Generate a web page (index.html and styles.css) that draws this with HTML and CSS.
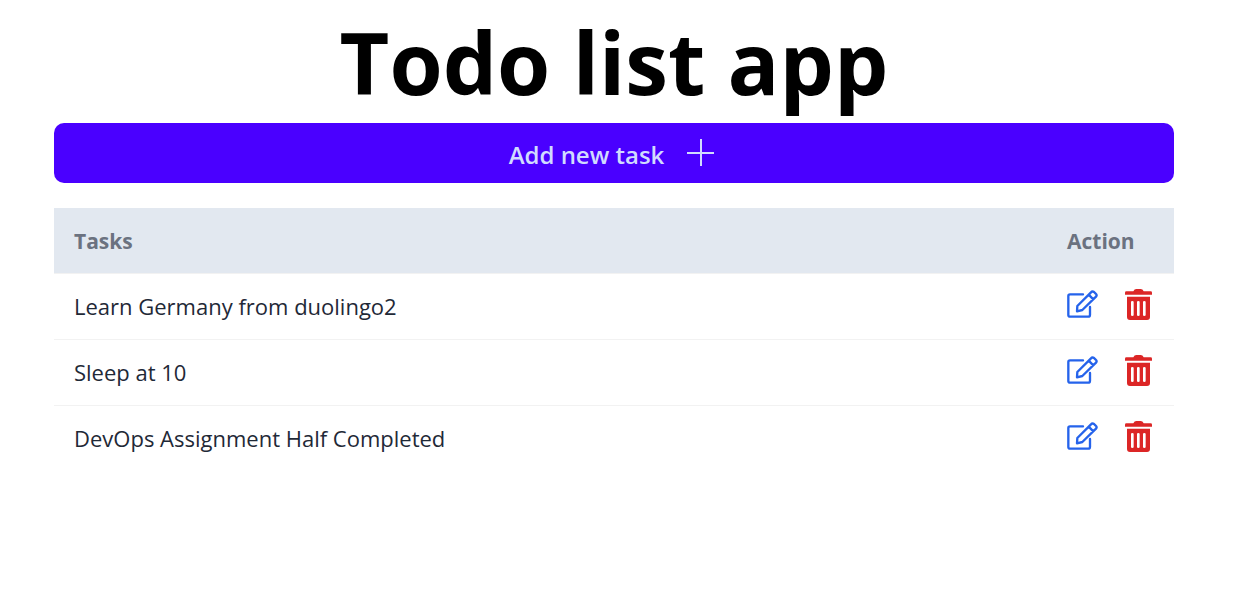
FILE: index.html
```html
<!DOCTYPE html>
<html lang="en">
<head>
<meta charset="utf-8">
<title>Todo list app</title>
<link rel="stylesheet" href="styles.css">
</head>
<body>
<svg class="sprite" aria-hidden="true">
  <symbol id="edit" viewBox="0 0 93 84">
    <path fill="none" stroke="currentColor" stroke-width="7" stroke-linecap="round" stroke-linejoin="round" d="M48 13H9Q4 13 4 18V75Q4 80 9 80H63Q69 80 69 74V51"/>
    <path fill="none" stroke="currentColor" stroke-width="7" stroke-linejoin="round" d="M31 48L72 7Q76 2 81 6L86 11Q91 15 87 20L46 60L30 64ZM65 14L79 28"/>
  </symbol>
  <symbol id="trash" viewBox="0 0 81 93">
    <path fill="currentColor" fill-rule="evenodd" d="M4 7H25Q28 0 34 0H47Q53 0 56 7H77Q81 7 81 11V17H0V11Q0 7 4 7ZM6 23H75V84Q75 93 66 93H15Q6 93 6 84ZM18 39V78Q18 81 22 81T26 78V39Q26 36 22 36T18 39ZM36 39V78Q36 81 40 81T44 78V39Q44 36 40 36T36 39ZM54 39V78Q54 81 58 81T62 78V39Q62 36 58 36T54 39Z"/>
  </symbol>
</svg>
<main class="page">
  <h1 class="title">Todo list app</h1>
  <button class="add" type="button">Add new task
    <svg class="plus" viewBox="0 0 28 28" aria-hidden="true"><path d="M14 0V27M0 14H27"/></svg>
  </button>
  <table class="tasks">
    <thead>
      <tr><th scope="col">Tasks</th><th class="action" scope="col">Action</th></tr>
    </thead>
    <tbody>
      <tr>
        <td>Learn Germany from duolingo2</td>
        <td class="action"><div class="buttons">
          <button class="icon edit" type="button" aria-label="Edit task"><svg><use href="#edit"/></svg></button>
          <button class="icon trash" type="button" aria-label="Delete task"><svg><use href="#trash"/></svg></button>
        </div></td>
      </tr>
      <tr>
        <td>Sleep at 10</td>
        <td class="action"><div class="buttons">
          <button class="icon edit" type="button" aria-label="Edit task"><svg><use href="#edit"/></svg></button>
          <button class="icon trash" type="button" aria-label="Delete task"><svg><use href="#trash"/></svg></button>
        </div></td>
      </tr>
      <tr>
        <td>DevOps Assignment Half Completed</td>
        <td class="action"><div class="buttons">
          <button class="icon edit" type="button" aria-label="Edit task"><svg><use href="#edit"/></svg></button>
          <button class="icon trash" type="button" aria-label="Delete task"><svg><use href="#trash"/></svg></button>
        </div></td>
      </tr>
    </tbody>
  </table>
</main>
</body>
</html>
```
FILE: styles.css
```css
* { box-sizing: border-box; }
body {
  margin: 0;
  background: #fff;
  color: #1f2937;
  font-family: "Segoe UI", "Open Sans", "Noto Sans", sans-serif;
}
.sprite { display: none; }
.page { padding: 14px 78px 16px 54px; }
.title {
  margin: 0;
  color: #000;
  font-size: 86px;
  line-height: 96px;
  font-weight: 700;
  text-align: center;
}
.add {
  display: flex;
  align-items: center;
  justify-content: center;
  gap: 23px;
  width: 100%;
  height: 60px;
  margin: 13px 0 25px;
  padding: 4px 4px 0 0;
  border: 0;
  border-radius: 10px;
  background: #4a00ff;
  color: #d1dbff;
  font: 600 24px/32px "Segoe UI", "Open Sans", "Noto Sans", sans-serif;
  cursor: pointer;
}
.plus {
  width: 28px;
  height: 28px;
  margin-bottom: 4px;
  fill: none;
  stroke: currentColor;
  stroke-width: 2;
}
.tasks {
  width: 100%;
  border-collapse: separate;
  border-spacing: 0;
  font-size: 22px;
  line-height: 32px;
}
.tasks th, .tasks td {
  height: 66px;
  padding: 0 20px;
  border-bottom: 1px solid #f2f2f2;
  text-align: left;
  vertical-align: middle;
}
.tasks td { padding-bottom: 2px; }
.tasks th {
  background: #e2e8f0;
  background-clip: padding-box;
  color: #6b7280;
  font-size: 21px;
  font-weight: 700;
}
.tasks tbody tr:last-child td { border-bottom-color: transparent; }
.tasks .action { width: 127px; }
.buttons {
  display: flex;
  align-items: center;
  gap: 27px;
  padding-bottom: 3px;
}
.icon {
  display: flex;
  padding: 0;
  border: 0;
  background: none;
  cursor: pointer;
}
.icon svg { width: 100%; height: 100%; }
.edit { width: 31px; height: 28px; color: #2563eb; }
.trash { width: 27px; height: 31px; color: #dc2626; }
```
